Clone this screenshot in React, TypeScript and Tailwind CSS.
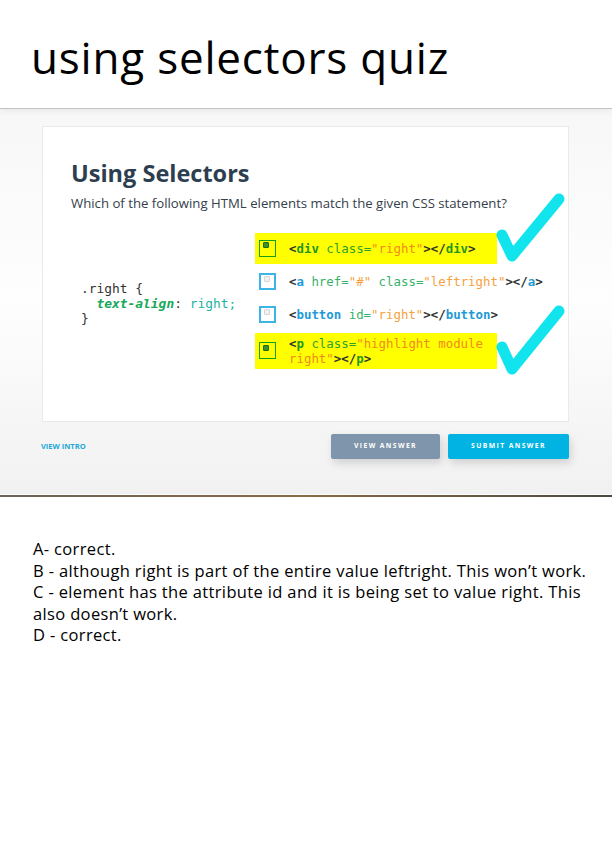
import React from "react";

const mono = "font-['DejaVu_Sans_Mono',monospace]";

function Box({ checked }: { checked: boolean }) {
  return checked ? (
    <div className="relative h-[17px] w-[17px] shrink-0 border-[1.5px] border-[#16a016]">
      <div className="absolute left-[3px] top-[1.5px] h-[6px] w-[6px] rounded-[1px] border border-[#1c6b1c] bg-[#3f8f2f]" />
    </div>
  ) : (
    <div className="relative h-[17px] w-[17px] shrink-0 border-2 border-[#3ab5e6] bg-white">
      <div className="absolute left-[3px] top-[1px] h-[6px] w-[6px] rounded-[1px] border border-[#d6d6d6] bg-[#f1f1f1]" />
    </div>
  );
}

function Option({
  checked,
  children,
  hl,
  tight,
}: {
  checked: boolean;
  children: React.ReactNode;
  hl?: boolean;
  tight?: boolean;
}) {
  return (
    <div
      className={
        "flex items-center gap-[13px] pl-[4px] min-h-[31px] " +
        (tight ? "py-[3px] " : "py-[7px] ") +
        (hl ? "bg-[#ffff00]" : "")
      }
    >
      <Box checked={checked} />
      <div className={mono + " text-[12.4px] leading-[15px] text-[#333] whitespace-nowrap"}>
        {children}
      </div>
    </div>
  );
}

export default function App() {
  const tag = "font-bold";
  return (
    <div className="w-[612px] min-h-[852px] bg-white font-['Open_Sans',sans-serif]">
      {/* header */}
      <header className="relative z-10 h-[109px] border-b border-[#c2c2c2] bg-white pl-[31px] pt-[28px] shadow-[0_2px_6px_rgba(0,0,0,0.06)]">
        <h1 className="text-[44px] leading-[1.36] tracking-[0.8px] text-black">
          using selectors quiz
        </h1>
      </header>

      {/* screenshot of quiz */}
      <section className="h-[385px] bg-gradient-to-b from-[#f7f7f7] via-[#fefefe] to-[#f1f1f1] pt-[17px]">
        <div className="relative ml-[42px] h-[296px] w-[527px] border border-[#e6ebf0] bg-white pl-[28px] pt-[31px]">
          <h2 className="text-[23.5px] font-bold leading-[1.36] text-[#2c3e50]">
            Using Selectors
          </h2>
          <p className="mt-[4px] text-[13.2px] leading-[19px] text-[#34404b]">
            Which of the following HTML elements match the given CSS statement?
          </p>

          <div className="mt-[20px] flex items-center">
            <div className={mono + " ml-[10px] mt-[6px] w-[174px] text-[12.9px] leading-[15px] text-[#333] whitespace-pre"}>
              <div>.right {"{"}</div>
              <div>
                {"  "}
                <span className="font-bold italic text-[#17a85a]">text-align</span>:{" "}
                <span className="text-[#1db3a3]">right;</span>
              </div>
              <div>{"}"}</div>
            </div>

            <div className="flex w-[242px] flex-col gap-[2px]">
              <Option checked hl>
                <span className={tag}>&lt;<span className="text-[#1f961f]">div</span></span>{" "}
                <span className="text-[#2ea22e]">class=</span>
                <span className="text-[#f28a1e]">"right"</span>
                <span className={tag}>&gt;&lt;/<span className="text-[#1f961f]">div</span>&gt;</span>
              </Option>
              <Option checked={false}>
                <span className={tag}>&lt;<span className="text-[#1e9ad6]">a</span></span>{" "}
                <span className="text-[#37b26a]">href=</span>
                <span className="text-[#f5a140]">"#"</span>{" "}
                <span className="text-[#37b26a]">class=</span>
                <span className="text-[#f5a140]">"leftright"</span>
                <span className={tag}>&gt;&lt;/<span className="text-[#1e9ad6]">a</span>&gt;</span>
              </Option>
              <Option checked={false}>
                <span className={tag}>&lt;<span className="text-[#1e9ad6]">button</span></span>{" "}
                <span className="text-[#37b26a]">id=</span>
                <span className="text-[#f5a140]">"right"</span>
                <span className={tag}>&gt;&lt;/<span className="text-[#1e9ad6]">button</span>&gt;</span>
              </Option>
              <div className="mt-[1px]">
                <Option checked hl tight>
                  <div className="w-[200px] whitespace-normal">
                    <span className={tag}>&lt;<span className="text-[#1f961f]">p</span></span>{" "}
                    <span className="text-[#2ea22e]">class=</span>
                    <span className="text-[#f28a1e]">"highlight module right"</span>
                    <span className={tag}>&gt;&lt;/<span className="text-[#1f961f]">p</span>&gt;</span>
                  </div>
                </Option>
              </div>
            </div>
          </div>

          {/* hand-drawn ticks */}
          <svg
            className="pointer-events-none absolute left-0 top-0 overflow-visible"
            width="527"
            height="296"
            viewBox="0 0 527 296"
          >
            <path
              d="M459 108 L469 129 L516 72"
              fill="none"
              stroke="#12e4ee"
              strokeWidth="11"
              strokeLinecap="round"
              strokeLinejoin="round"
            />
            <path
              d="M459 220 L469 242 L516 184"
              fill="none"
              stroke="#12e4ee"
              strokeWidth="11"
              strokeLinecap="round"
              strokeLinejoin="round"
            />
          </svg>
        </div>

        <div className="ml-[41px] mr-[43px] mt-[12px] flex items-center justify-between">
          <span className="text-[7.5px] font-bold text-[#22a8d8]">VIEW INTRO</span>
          <div className="flex gap-[8px]">
            <button className="h-[25px] w-[109px] rounded-[2px] bg-[#7f95ab] text-[6.8px] font-bold tracking-[1.4px] text-white shadow-[2px_4px_8px_rgba(0,0,0,0.15)]">
              VIEW ANSWER
            </button>
            <button className="h-[25px] w-[121px] rounded-[2px] bg-[#00b3e3] text-[6.8px] font-bold tracking-[1.4px] text-white shadow-[2px_4px_8px_rgba(0,0,0,0.15)]">
              SUBMIT ANSWER
            </button>
          </div>
        </div>
      </section>
      <div className="h-[1px] bg-white" />
      <div className="h-[2px] bg-gradient-to-r from-[#6b6258] via-[#8a6a45] to-[#4a4a40]" />

      {/* notes */}
      <div className="pl-[33px] pt-[41px] text-[16.5px] leading-[21.5px] tracking-[0.35px] text-black">
        <p>A- correct.</p>
        <p>B - although right is part of the entire value leftright. This won’t work.</p>
        <p>
          C - element has the attribute id and it is being set to value right. This
          <br />
          also doesn’t work.
        </p>
        <p>D - correct.</p>
      </div>
    </div>
  );
}
